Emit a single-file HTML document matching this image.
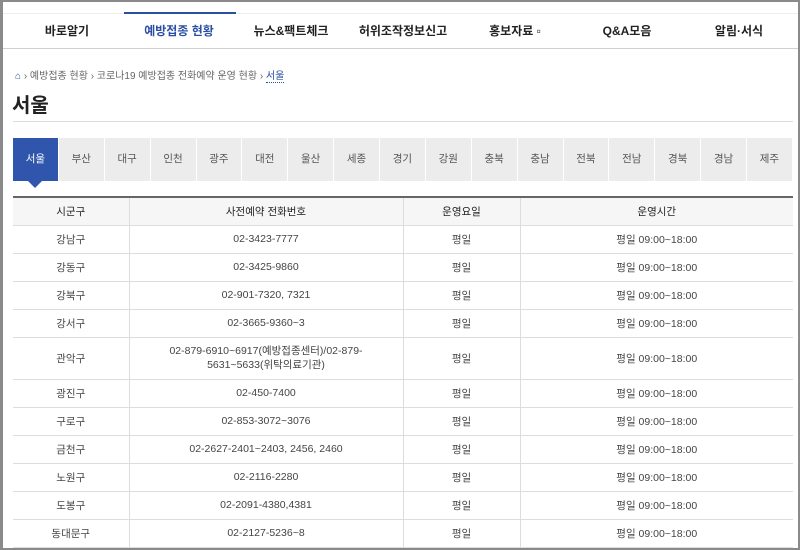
<!DOCTYPE html>
<html><head><meta charset="utf-8"><style>
*{margin:0;padding:0;box-sizing:border-box}
body{width:800px;height:550px;overflow:hidden;background:#fff;font-family:"Liberation Sans","Noto Sans CJK KR",sans-serif;color:#333;position:relative}
.frame{position:absolute;left:0;top:0;width:800px;height:550px;border:2px solid #8a8a8a;border-left-width:3px}
.nav{position:absolute;left:3px;top:13px;width:795px;height:36px;border-top:1px solid #eee;border-bottom:1px solid #d0d0d0;display:flex;padding-left:8px}
.nav div{width:112px;text-align:center;font-size:12px;font-weight:bold;line-height:34px;color:#222}
.nav .on{color:#2b4fa3}
.bar{position:absolute;left:124px;top:12px;width:112px;height:2px;background:#2b4fa3}
.bc{position:absolute;left:15px;top:67px;font-size:10px;color:#666;white-space:nowrap}
.bc b{color:#2b4fa3;font-weight:normal;border-bottom:1px dotted #2b4fa3}
h1{position:absolute;left:12px;top:89px;font-size:20px;font-weight:bold;color:#222}
.hr{position:absolute;left:13px;top:121px;width:780px;height:1px;background:#ddd}
.tabs{position:absolute;left:13px;top:138px;width:780px;height:43px;display:flex}
.tabs div{flex:1;background:#ececec;border-right:1px solid #fff;text-align:center;line-height:43px;font-size:10.5px;color:#555}
.tabs .on{background:#2f55ad;color:#fff;position:relative}
.tabs .on:after{content:"";position:absolute;left:15px;bottom:-7px;border-left:7px solid transparent;border-right:7px solid transparent;border-top:7px solid #2f55ad}
table{position:absolute;left:13px;top:196px;width:780px;border-collapse:collapse;border-top:2px solid #666;font-size:10.5px;color:#444}
td,th{border-bottom:1px solid #ddd;border-right:1px solid #ddd;text-align:center;height:28px;font-weight:normal}
th{background:#f6f6f6;color:#222;height:28px}
td:last-child,th:last-child{border-right:none}
</style></head><body>
<div class="nav"><div>바로알기</div><div class="on">예방접종 현황</div><div>뉴스&amp;팩트체크</div><div>허위조작정보신고</div><div>홍보자료 ▫</div><div>Q&amp;A모음</div><div>알림·서식</div></div>
<div class="bar"></div>
<div class="bc"><span style="color:#2b4fa3">⌂</span> › 예방접종 현황 › 코로나19 예방접종 전화예약 운영 현황 › <b>서울</b></div>
<h1>서울</h1>
<div class="hr"></div>
<div class="tabs"><div class="on">서울</div><div>부산</div><div>대구</div><div>인천</div><div>광주</div><div>대전</div><div>울산</div><div>세종</div><div>경기</div><div>강원</div><div>충북</div><div>충남</div><div>전북</div><div>전남</div><div>경북</div><div>경남</div><div>제주</div></div>
<table>
<tr><th style="width:116px">시군구</th><th style="width:274px">사전예약 전화번호</th><th style="width:117px">운영요일</th><th>운영시간</th></tr>
<tr><td>강남구</td><td>02-3423-7777</td><td>평일</td><td>평일 09:00~18:00</td></tr>
<tr><td>강동구</td><td>02-3425-9860</td><td>평일</td><td>평일 09:00~18:00</td></tr>
<tr><td>강북구</td><td>02-901-7320, 7321</td><td>평일</td><td>평일 09:00~18:00</td></tr>
<tr><td>강서구</td><td>02-3665-9360~3</td><td>평일</td><td>평일 09:00~18:00</td></tr>
<tr><td style="height:42px">관악구</td><td style="line-height:14px">02-879-6910~6917(예방접종센터)/02-879-<br>5631~5633(위탁의료기관)</td><td>평일</td><td>평일 09:00~18:00</td></tr>
<tr><td>광진구</td><td>02-450-7400</td><td>평일</td><td>평일 09:00~18:00</td></tr>
<tr><td>구로구</td><td>02-853-3072~3076</td><td>평일</td><td>평일 09:00~18:00</td></tr>
<tr><td>금천구</td><td>02-2627-2401~2403, 2456, 2460</td><td>평일</td><td>평일 09:00~18:00</td></tr>
<tr><td>노원구</td><td>02-2116-2280</td><td>평일</td><td>평일 09:00~18:00</td></tr>
<tr><td>도봉구</td><td>02-2091-4380,4381</td><td>평일</td><td>평일 09:00~18:00</td></tr>
<tr><td>동대문구</td><td>02-2127-5236~8</td><td>평일</td><td>평일 09:00~18:00</td></tr>
</table>
<div class="frame"></div>
</body></html>
